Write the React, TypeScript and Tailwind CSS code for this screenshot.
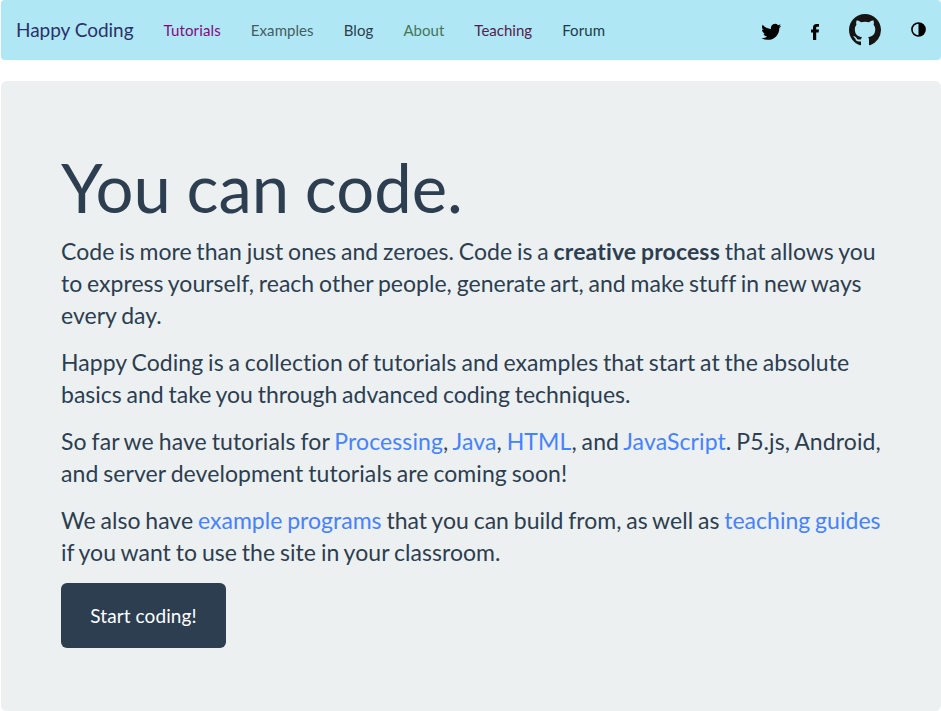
import type { ReactNode } from "react";

const links = [
  ["Tutorials", "text-[#830b7c]", "tracking-[0.14px]"],
  ["Examples", "text-[#455c60]", "tracking-[0.07px]"],
  ["Blog", "text-[#2e3d4b]", "tracking-[0.1px]"],
  ["About", "text-[#477555]", "tracking-[0.02px]"],
  ["Teaching", "text-[#55204e]", "tracking-[0.02px]"],
  ["Forum", "text-[#1c3a4c]", "tracking-[0.08px]"],
];

function A({ children }: { children: ReactNode }) {
  return <a className="text-[#4582ff]">{children}</a>;
}

export default function App() {
  return (
    <div className="h-[711px] overflow-hidden bg-white pl-px font-['Lato',sans-serif] text-[#2c3e50] [font-variant-ligatures:none]">
      <nav className="flex h-[60px] items-center rounded bg-[#b0e7f5] pl-[15px]">
        <a className="mr-[30px] text-[19px] leading-5 tracking-[-0.03px] text-[#2c3069]">Happy Coding</a>
        <div className="flex gap-[30px] text-[15px]">
          {links.map(([label, color, tracking]) => (
            <a key={label} className={`${color} ${tracking}`}>{label}</a>
          ))}
        </div>
        <div className="ml-auto flex items-center pr-[15px] text-black">
          <svg viewBox="0 1.5 24 22" className="mt-[4px] mr-[29px] h-[18px] w-5 overflow-visible" preserveAspectRatio="none">
            <path transform="translate(-.6 0)" d="M23.6 4.9c-.9.4-1.8.7-2.8.8 1-.6 1.8-1.6 2.2-2.7-1 .6-2 1-3.1 1.2A4.9 4.9 0 0 0 11.5 8.700C7.400 8.500 3.800 6.500 1.400 3.600a4.900 4.900 0 0 0 1.500 6.500c-.8 0-1.600-.2-2.200-.6v.1c0 2.300 1.700 4.300 3.900 4.800-.7.2-1.500.2-2.200.1.600 2 2.400 3.400 4.600 3.400A9.900 9.900 0 0 1-.3 19.900 14 14 0 0 0 7.400 22.100c9.100 0 14-7.500 14-14v-.6c.9-.7 1.700-1.600 2.200-2.600Z" />
          </svg>
          <svg viewBox="0 0 8 16" preserveAspectRatio="none" className="mt-[3px] mr-[30px] h-4 w-2">
            <path d="M2 16V8.500H0V5.600h2V3.700C2 1.300 3.300 0 5.500 0H8v2.800H6.400C5.500 2.800 5.200 3.200 5.200 4v1.600H8l-.4 2.900H5.200V16Z" />
          </svg>
          <svg viewBox="0 0 16 16" className="mr-[30px] size-8" fill="#161514">
            <path d="M8 0C3.58 0 0 3.58 0 8c0 3.54 2.29 6.53 5.47 7.59.4.07.55-.17.55-.38 0-.19-.01-.82-.01-1.49-2.01.37-2.53-.49-2.69-.94-.09-.23-.48-.94-.82-1.13-.28-.15-.68-.52-.01-.53.63-.01 1.08.58 1.23.82.72 1.21 1.87.87 2.33.66.07-.52.28-.87.51-1.07-1.78-.2-3.64-.89-3.64-3.95 0-.87.31-1.59.82-2.15-.08-.2-.36-1.02.08-2.12 0 0 .67-.21 2.2.82.64-.18 1.32-.27 2-.27s1.36.09 2 .27c1.53-1.04 2.2-.82 2.2-.82.44 1.1.16 1.92.08 2.12.51.56.82 1.27.82 2.15 0 3.07-1.87 3.75-3.65 3.95.29.25.54.73.54 1.48 0 1.07-.01 1.93-.01 2.2 0 .21.15.46.55.38A8.01 8.01 0 0 0 16 8c0-4.42-3.58-8-8-8Z" />
          </svg>
          <svg viewBox="0 0 16 16" className="mb-px size-[15px]">
            <circle cx="8" cy="8" r="7" fill="none" stroke="black" strokeWidth="1.7" />
            <path d="M8 1a7 7 0 0 1 0 14Z" />
          </svg>
        </div>
      </nav>
      <main className="mt-[21px] h-[630px] rounded-md bg-[#ecf0f1] px-[60px] pt-[70px]">
        <h1 className="mb-[12px] text-[67px] leading-[72px] [word-spacing:-1.500px]">You can code.</h1>
        <div className="space-y-[15px] text-[23px] leading-8 whitespace-nowrap [word-spacing:-1.100px]">
          <p className="tracking-[0.025px]">Code is more than just ones and zeroes. Code is a <b className="tracking-[0.15px]">creative process</b> <span className="tracking-[0.06px]">that allows you</span><br />to express yourself, reach other people, generate art, and make stuff in new ways<br />every day.</p>
          <p><span className="tracking-[0.055px]">Happy Coding is a collection of tutorials and examples that start at the absolute</span><br />basics and take you through advanced coding techniques.</p>
          <p className="tracking-[0.1px]">So far we have tutorials for <A>Processing</A>, <A>Java</A>, <A>HTML</A>, and <A>JavaScript</A>. P5.js, Android,<br /><span className="tracking-[0.08px]">and server development tutorials are coming soon!</span></p>
          <p className="tracking-[0.025px]">We also have <A>example programs</A> that you can build from, as well as <A>teaching guides</A><br /><span className="tracking-[0.05px]">if you want to use the site in your classroom.</span></p>
        </div>
        <button className="mt-[15px] h-[65px] w-[165px] rounded-md bg-[#2c3e50] pt-px text-[19px] tracking-[0.1px] text-white">Start coding!</button>
      </main>
    </div>
  );
}
